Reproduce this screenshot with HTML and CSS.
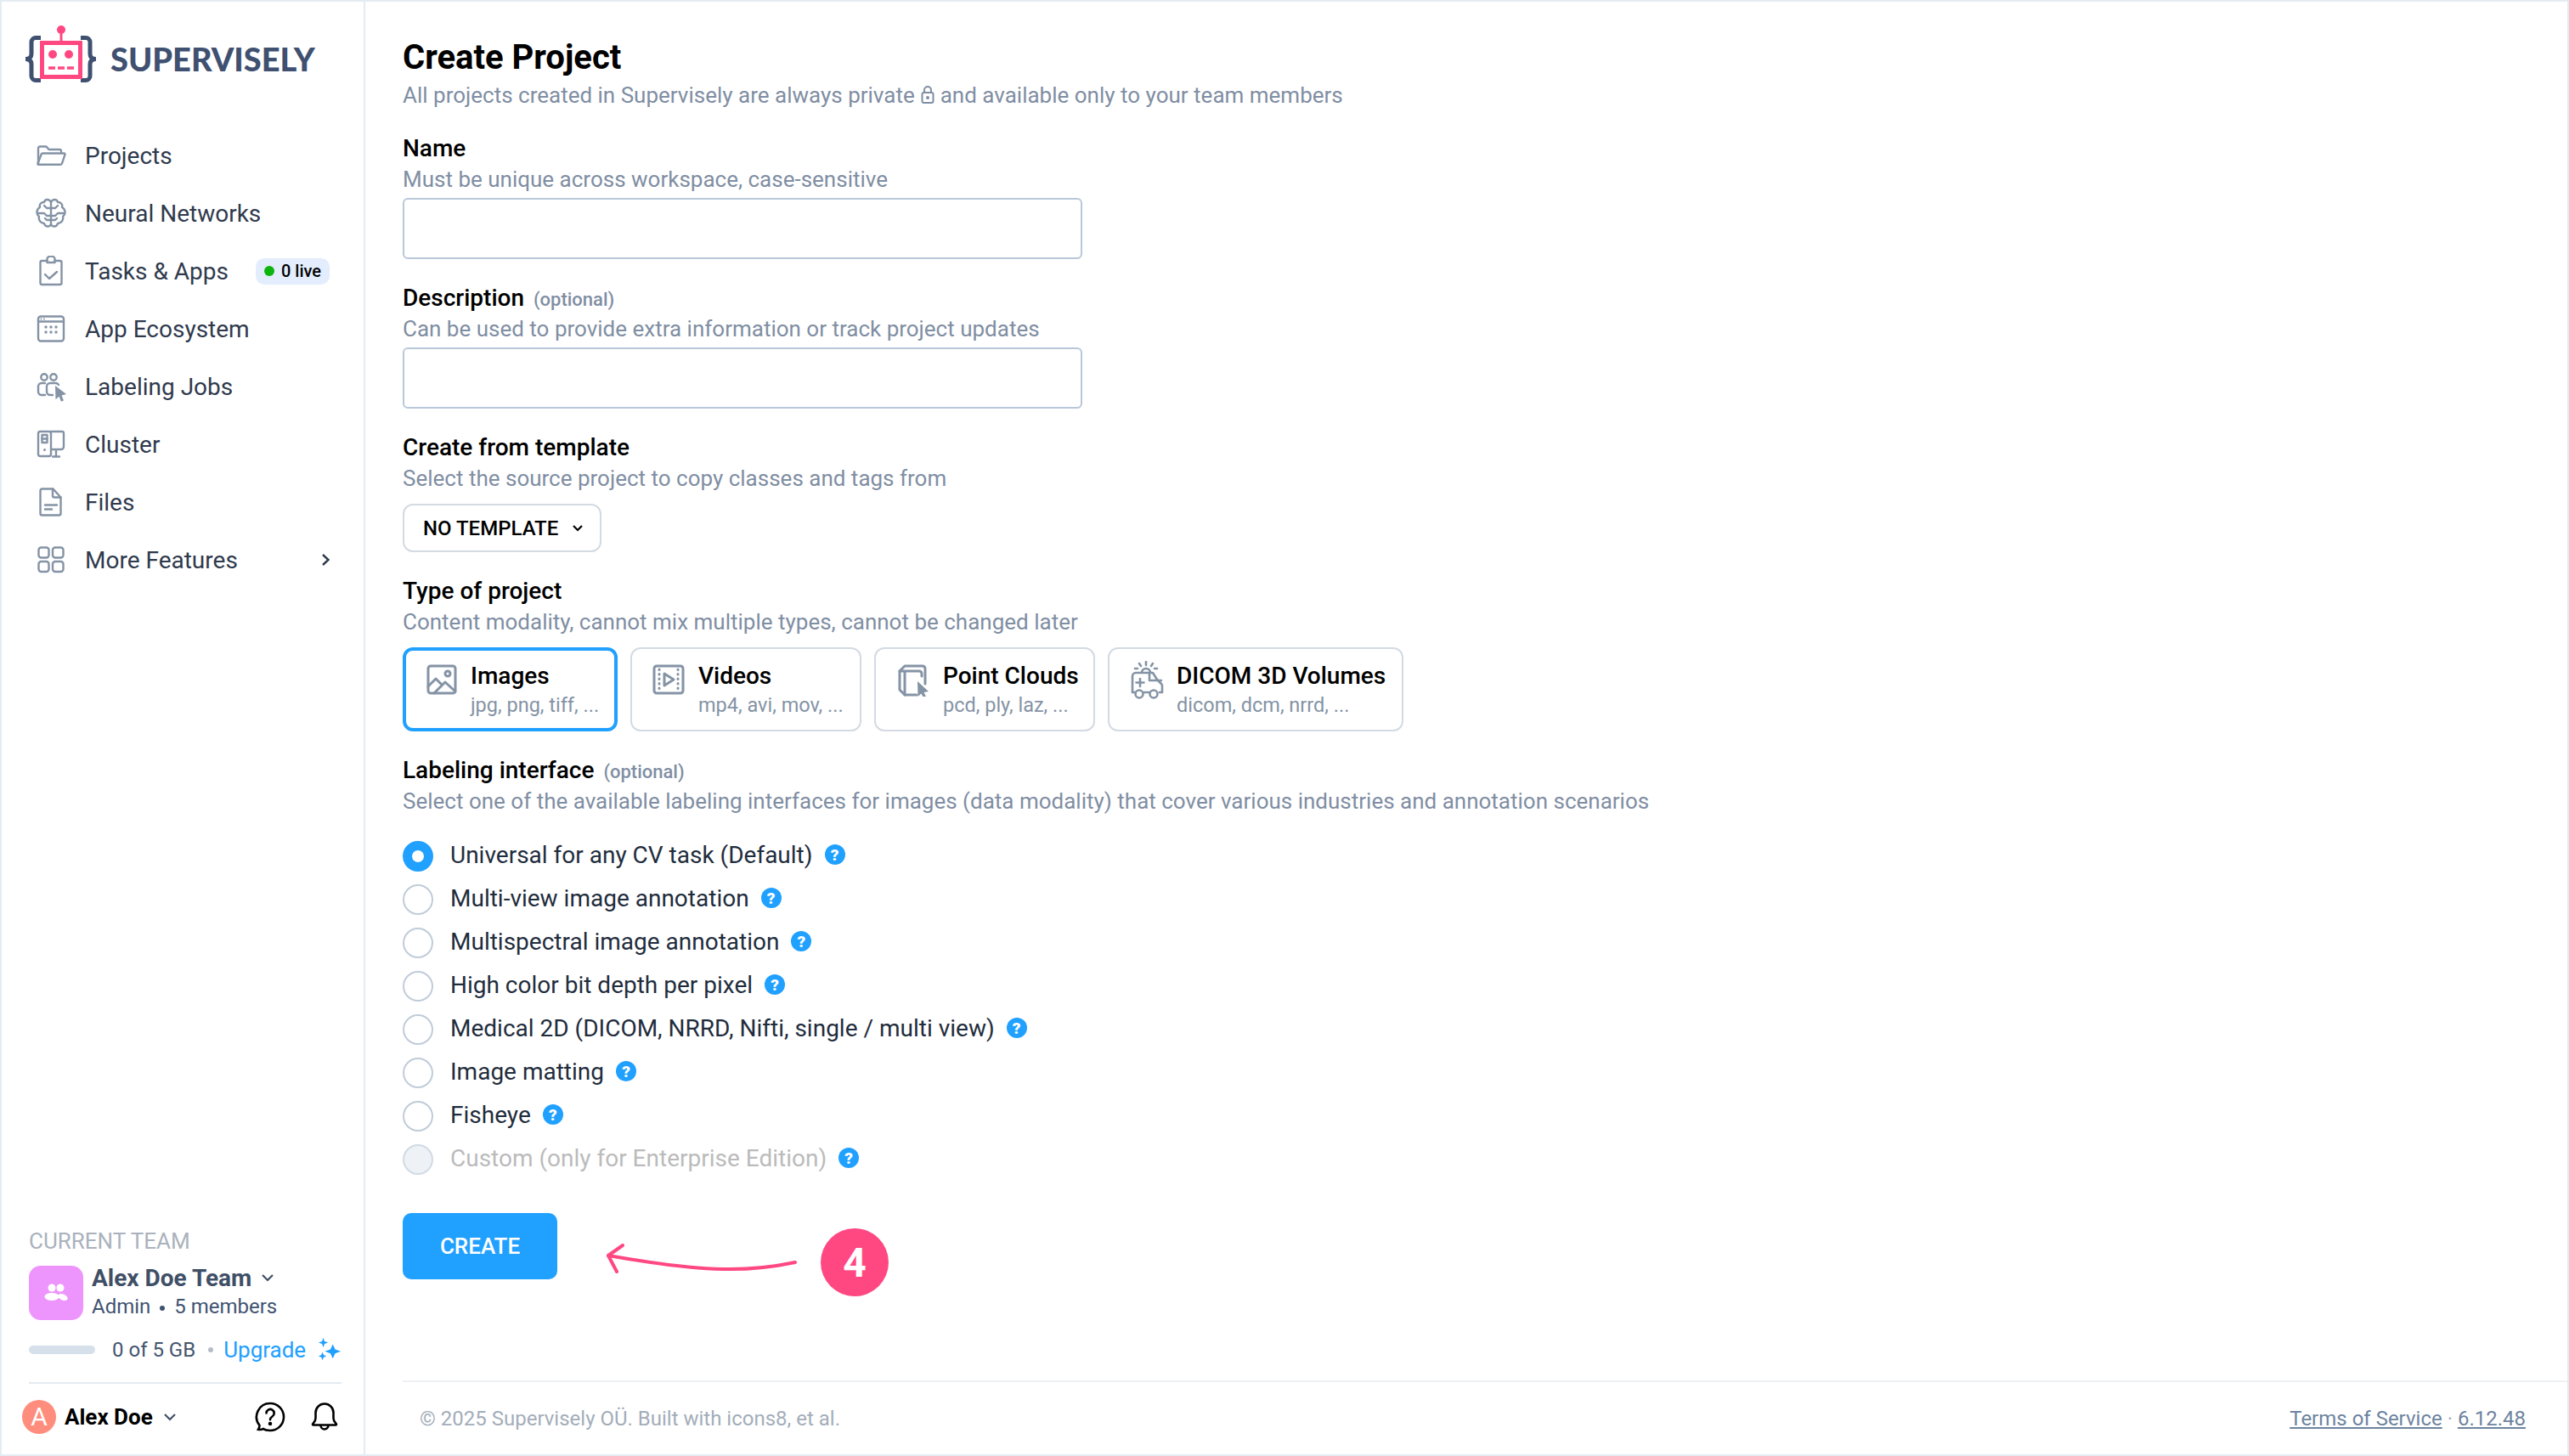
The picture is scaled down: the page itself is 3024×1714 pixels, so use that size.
FILE: index.html
```html
<!DOCTYPE html>
<html>
<head>
    <title>Create Project</title>
    <link rel="stylesheet" href="styles.css">
</head>
<body>
<div class="app">
    <aside class="sidebar">
        <div class="logo">
            <svg class="logo-mark" width="84" height="70" viewBox="0 0 84 70" fill="none">
                <path d="M18 14.500h-6a5 5 0 0 0-5 5v14c0 3-1.500 6-7 6 5.500 0 7 3 7 6v14a5 5 0 0 0 5 5h6" stroke="#3f5070" stroke-width="5"/>
                <path d="M65 14.500h6a5 5 0 0 1 5 5v14c0 3 1.500 6 7 6-5.500 0-7 3-7 6v14a5 5 0 0 1-5 5h-6" stroke="#3f5070" stroke-width="5"/>
                <rect x="19.500" y="20.500" width="45" height="40" stroke="#ff4882" stroke-width="5"/>
                <circle cx="42" cy="5" r="5" fill="#ff4882"/>
                <path d="M42 8v12" stroke="#ff4882" stroke-width="3"/>
                <circle cx="32" cy="34" r="5" fill="#ff4882"/>
                <circle cx="51" cy="34" r="5" fill="#ff4882"/>
                <path d="M27 50h30" stroke="#ff4882" stroke-width="3.500" stroke-dasharray="8 3"/>
            </svg>
            <span class="logo-text">SUPERVISELY</span>
        </div>

        <nav class="nav">
            <a class="nav-item">
                <svg class="nav-icon" viewBox="0 0 36 36"><path d="M3 27V9.500a2 2 0 0 1 2-2h7.500l3 3.500H28a2 2 0 0 1 2 2v2"/><path d="M8.500 15.500h25a1 1 0 0 1 1 1.300l-3.500 10.500a2 2 0 0 1-2 1.500H3.500a1 1 0 0 1-1-1.300L6.500 17a2 2 0 0 1 2-1.500z"/></svg>
                <span>Projects</span>
            </a>
            <a class="nav-item">
                <svg class="nav-icon" viewBox="0 0 36 36"><path d="M18 5C16 1 11 1 10 5 6 5 4 8 5 11 1 13 0 19 4 22 3 26 6 30 10 30 11 34 16 35 18 31V5z"/><path d="M18 5C20 1 25 1 26 5 30 5 32 8 31 11 35 13 36 19 32 22 33 26 30 30 26 30 25 34 20 35 18 31"/><path d="M18 12h-5l-3-3M3 18h7l3 3h5M18 26h-5l-2-2M18 12h5l3-3M33 18h-7l-3 3h-5M18 26h5l2-2"/></svg>
                <span>Neural Networks</span>
            </a>
            <a class="nav-item">
                <svg class="nav-icon" viewBox="0 0 36 36"><path d="M13.500 6H7.500a2 2 0 0 0-2 2v24a2 2 0 0 0 2 2h21a2 2 0 0 0 2-2V8a2 2 0 0 0-2-2h-6"/><path d="M13.500 8V3.500a4.500 3 0 0 1 9 0V8z"/><path d="M11 22l5 5 9-8"/></svg>
                <span>Tasks &amp; Apps</span>
                <span class="live-badge"><i class="live-dot"></i>0 live</span>
            </a>
            <a class="nav-item">
                <svg class="nav-icon" viewBox="0 0 36 36"><rect x="3" y="3.500" width="30" height="29" rx="3"/><path d="M3 9.500h30"/><g class="dots"><circle cx="6.500" cy="6.500" r="1"/><circle cx="10" cy="6.500" r="1"/><circle cx="12" cy="16" r="1.700"/><circle cx="18" cy="16" r="1.700"/><circle cx="24" cy="16" r="1.700"/><circle cx="12" cy="22" r="1.700"/><circle cx="18" cy="22" r="1.700"/><circle cx="24" cy="22" r="1.700"/></g></svg>
                <span>App Ecosystem</span>
            </a>
            <a class="nav-item">
                <svg class="nav-icon" viewBox="0 0 36 36"><circle cx="10" cy="7" r="3.700"/><circle cx="21" cy="7" r="3.700"/><path d="M11 28H7a4 4 0 0 1-4-4v-6a4 4 0 0 1 4-4h4"/><path d="M20 28h-3a4 4 0 0 1-4-4v-6a4 4 0 0 1 4-4h7a4 4 0 0 1 3 2"/><path class="solid" d="M23 17l13 10-5.500 1.500 2.500 6-3 1.200-2.500-6-4 3.500z"/></svg>
                <span>Labeling Jobs</span>
            </a>
            <a class="nav-item">
                <svg class="nav-icon" viewBox="0 0 36 36"><rect x="3" y="3" width="15" height="29" rx="2.500"/><rect x="7.500" y="7" width="6" height="9"/><path d="M7.500 11.500h6"/><circle class="solid" cx="10.500" cy="24.500" r="1.500"/><path d="M18 3h13a2 2 0 0 1 2 2v16a3 3 0 0 1-3 3H18M24 24v8M20 32.500h8"/></svg>
                <span>Cluster</span>
            </a>
            <a class="nav-item">
                <svg class="nav-icon" viewBox="0 0 36 36"><path d="M7.500 2.500h13l9 10v19a2 2 0 0 1-2 2h-20a2 2 0 0 1-2-2v-27a2 2 0 0 1 2-2z"/><path d="M20 2.500v8a2 2 0 0 0 2 2h7.500M11 21.500h14M11 26.500h8"/></svg>
                <span>Files</span>
            </a>
            <a class="nav-item">
                <svg class="nav-icon" viewBox="0 0 36 36"><rect x="3.500" y="3.500" width="12" height="12" rx="3"/><rect x="20" y="3.500" width="12.500" height="12" rx="3"/><rect x="3.500" y="20" width="12" height="12" rx="3"/><rect x="20" y="20" width="12.500" height="12" rx="3"/></svg>
                <span>More Features</span>
                <svg class="nav-arrow" width="12" height="16" viewBox="0 0 12 16"><path d="M2 2l6.500 6L2 14"/></svg>
            </a>
        </nav>

        <div class="team">
            <div class="team-caption">CURRENT TEAM</div>
            <div class="team-row">
                <div class="team-avatar">
                    <svg width="28" height="22" viewBox="0 0 28 22" fill="#fff"><circle cx="9" cy="5" r="4.500"/><circle cx="19" cy="5" r="4.500"/><ellipse cx="9" cy="15.500" rx="8.500" ry="4.500"/><ellipse cx="22" cy="16" rx="6" ry="3.500" transform="rotate(25 22 16)"/></svg>
                </div>
                <div class="team-info">
                    <div class="team-name">Alex Doe Team
                        <svg class="chev" width="16" height="10" viewBox="0 0 16 10"><path d="M2 2l6 6 6-6"/></svg>
                    </div>
                    <div class="team-role">Admin <i class="role-dot"></i> 5 members</div>
                </div>
            </div>
            <div class="usage">
                <div class="usage-bar"></div>
                <span class="usage-text">0 of 5 GB</span>
                <i class="usage-dot"></i>
                <a class="upgrade">Upgrade</a>
                <svg class="sparkle" width="28" height="28" viewBox="0 0 30 30" fill="#20a0ff"><path d="M19 8l3 6.500 7 2.500-7 2.500-3 6.500-3-6.500-7-2.500 7-2.500z"/><path d="M7 0l1.600 4.400L13 6 8.600 7.600 7 12 5.400 7.600 1 6l4.400-1.600z"/><path d="M6 18l1.500 3.500L11 23l-3.500 1.500L6 28l-1.500-3.500L1 23l3.500-1.500z"/></svg>
            </div>
        </div>

        <div class="user-row">
            <div class="user-avatar">A</div>
            <span class="user-name">Alex Doe</span>
            <svg class="chev" width="16" height="10" viewBox="0 0 16 10"><path d="M2 2l6 6 6-6"/></svg>
            <svg class="user-help" width="36" height="36" viewBox="0 0 36 36" fill="none" stroke="#000" stroke-width="2.600"><path d="M18 2a16 16 0 0 1 0 32c-3 0-6-.5-8-2-1.500.8-4 1.200-6 .8 1-1.500 1.500-3 1.500-4.800A16 16 0 0 1 18 2z"/><path d="M13.500 13.500a4.600 4.600 0 1 1 7 4c-1.500 1-2.500 1.800-2.500 3.800" stroke-linecap="round"/><circle cx="18" cy="26" r="1" fill="#000"/></svg>
            <svg class="user-bell" width="32" height="36" viewBox="0 0 32 36" fill="none" stroke="#000" stroke-width="2.600"><path d="M2 26.500c0-1 3.500-2.500 3.500-7V13a10.500 10.500 0 0 1 21 0v6.500c0 4.500 3.500 6 3.500 7 0 .8-.5 1-1.500 1h-25c-1 0-1.500-.2-1.500-1z"/><path d="M11.500 28a4.500 4.500 0 0 0 9 0"/></svg>
        </div>
    </aside>

    <main class="main">
        <div class="content">
            <h1 class="title">Create Project</h1>
            <p class="hint">All projects created in Supervisely are always private
                <svg class="lock" width="16" height="24" viewBox="0 0 16 24" fill="none" stroke="#7f8ea3" stroke-width="2"><rect x="1.500" y="9" width="13" height="12" rx="2"/><path d="M4 9V6a4 4 0 0 1 8 0v3"/><circle cx="8" cy="15" r="1" fill="#7f8ea3"/></svg>
                and available only to your team members</p>

            <div class="field field-first">
                <div class="label">Name</div>
                <p class="hint">Must be unique across workspace, case-sensitive</p>
                <input class="text-input" type="text">
            </div>

            <div class="field">
                <div class="label">Description <span class="optional">(optional)</span></div>
                <p class="hint">Can be used to provide extra information or track project updates</p>
                <input class="text-input" type="text">
            </div>

            <div class="field">
                <div class="label">Create from template</div>
                <p class="hint">Select the source project to copy classes and tags from</p>
                <button class="select-btn">NO TEMPLATE
                    <svg class="chev-dark" width="14" height="10" viewBox="0 0 14 10"><path d="M2 2l5 5 5-5"/></svg>
                </button>
            </div>

            <div class="field">
                <div class="label">Type of project</div>
                <p class="hint">Content modality, cannot mix multiple types, cannot be changed later</p>
                <div class="cards">
                    <div class="card card-images card-active">
                        <svg class="card-icon" viewBox="0 0 36 36"><rect x="2" y="2" width="32" height="32" rx="3"/><circle cx="25" cy="11" r="3"/><path d="M2 26l9-9 7 7M9 34l13-13 12 11"/></svg>
                        <div class="card-text"><div class="card-title">Images</div><div class="card-sub">jpg, png, tiff, ...</div></div>
                    </div>
                    <div class="card card-videos">
                        <svg class="card-icon" viewBox="0 0 38 36"><rect x="2" y="2" width="34" height="32" rx="3"/><path class="strip" d="M8 6v25M30 6v25"/><path d="M14 11l11 7-11 7z"/></svg>
                        <div class="card-text"><div class="card-title">Videos</div><div class="card-sub">mp4, avi, mov, ...</div></div>
                    </div>
                    <div class="card card-points">
                        <svg class="card-icon" viewBox="0 0 36 38"><path d="M8 2h21a3 3 0 0 1 3 3v18M8 2L2 8v22l6 6h14"/><path d="M2 8h23a3 3 0 0 1 3 3v3M8 8v28"/><path class="solid" d="M23 20l13 12-5.500 1 3 6-3 1.500-3-6-4 3.500z"/></svg>
                        <div class="card-text"><div class="card-title">Point Clouds</div><div class="card-sub">pcd, ply, laz, ...</div></div>
                    </div>
                    <div class="card card-dicom">
                        <svg class="card-icon" viewBox="0 0 40 45"><path d="M11 3l2 3M19 1v4M27 3l-2 3M6 9h3M29 9h3"/><path d="M14 14a5 5 0 0 1 10 0M3 37V18a4 4 0 0 1 4-4h20l5 8 5 5a3 3 0 0 1 1 2v8h-3"/><path d="M23 14v9h14"/><path d="M12 21v9M7.500 25.500h9"/><path d="M3 37h3M17 37h6"/><circle cx="11" cy="39" r="4.500"/><circle cx="28" cy="39" r="4.500"/></svg>
                        <div class="card-text"><div class="card-title">DICOM 3D Volumes</div><div class="card-sub">dicom, dcm, nrrd, ...</div></div>
                    </div>
                </div>
            </div>

            <div class="field">
                <div class="label">Labeling interface <span class="optional">(optional)</span></div>
                <p class="hint">Select one of the available labeling interfaces for images (data modality) that cover various industries and annotation scenarios</p>
                <div class="radios">
                    <label class="radio-row"><i class="radio radio-on"></i><span>Universal for any CV task (Default)</span><b class="help">?</b></label>
                    <label class="radio-row"><i class="radio"></i><span>Multi-view image annotation</span><b class="help">?</b></label>
                    <label class="radio-row"><i class="radio"></i><span>Multispectral image annotation</span><b class="help">?</b></label>
                    <label class="radio-row"><i class="radio"></i><span>High color bit depth per pixel</span><b class="help">?</b></label>
                    <label class="radio-row"><i class="radio"></i><span>Medical 2D (DICOM, NRRD, Nifti, single / multi view)</span><b class="help">?</b></label>
                    <label class="radio-row"><i class="radio"></i><span>Image matting</span><b class="help">?</b></label>
                    <label class="radio-row"><i class="radio"></i><span>Fisheye</span><b class="help">?</b></label>
                    <label class="radio-row radio-row-off"><i class="radio radio-off"></i><span>Custom (only for Enterprise Edition)</span><b class="help">?</b></label>
                </div>
            </div>

            <div class="actions">
                <button class="create-btn">CREATE</button>
                <svg class="arrow" width="240" height="50" viewBox="0 0 240 50" fill="none" stroke="#ff4882" stroke-width="4" stroke-linecap="round" stroke-linejoin="round"><path d="M222 22C170 33 120 35 2 14"/><path d="M19 2L2 14l10 19"/></svg>
                <div class="step">4</div>
            </div>
        </div>

        <footer class="footer">
            <span>© 2025 Supervisely OÜ. Built with icons8, et al.</span>
            <span class="footer-links"><a>Terms of Service</a> <i>·</i> <a>6.12.48</a></span>
        </footer>
    </main>
</div>
</body>
</html>
```

FILE: styles.css
```css
html, body {
    margin: 0;
    height: 100%;
}

body {
    background-color: #e4ebf1;
    font-family: Roboto, "Liberation Sans", sans-serif;
    color: #000;
}

* {
    box-sizing: border-box;
}

i {
    font-style: normal;
}

.app {
    display: flex;
    height: 1714px;
    padding: 2px;
    background-color: #e4ebf1;
}

/* sidebar */
.sidebar {
    display: flex;
    flex-direction: column;
    width: 426px;
    flex-shrink: 0;
    background-color: #fff;
    margin-right: 2px;
}

.logo {
    display: flex;
    align-items: center;
    height: 70px;
    margin: 28px 0 0 28px;
}

.logo-text {
    margin-left: 16px;
    padding-top: 7px;
    font-family: Lato, sans-serif;
    font-weight: 900;
    font-size: 38px;
    color: #3f5070;
}

.nav {
    margin-top: 49px;
    padding: 0 40px;
}

.nav-item {
    display: flex;
    align-items: center;
    height: 68px;
    gap: 22px;
    font-size: 28px;
    color: #2f3a4d;
}

.nav-icon {
    width: 36px;
    height: 36px;
    flex-shrink: 0;
    fill: none;
    stroke: #8493a5;
    stroke-width: 2.400;
    stroke-linejoin: round;
    stroke-linecap: round;
}

.nav-icon .dots,
.nav-icon .solid {
    fill: #8493a5;
    stroke: none;
}

.nav-arrow {
    margin-left: auto;
    margin-right: -2px;
    fill: none;
    stroke: #2f3a4d;
    stroke-width: 2.400;
}

.live-badge {
    display: flex;
    align-items: center;
    gap: 8px;
    height: 31px;
    margin-left: auto;
    padding: 0 10px;
    border-radius: 10px;
    background-color: #e3edfd;
    font-size: 20px;
    font-weight: 500;
    color: #000;
}

.live-dot {
    width: 12px;
    height: 12px;
    border-radius: 50%;
    background-color: #0eb40e;
}

.team {
    margin-top: auto;
    padding: 0 26px 0 32px;
}

.team-caption {
    font-size: 26px;
    line-height: 32px;
    color: #aab2bd;
}

.team-row {
    display: flex;
    gap: 10px;
    margin-top: 13px;
}

.team-avatar {
    display: flex;
    align-items: center;
    justify-content: center;
    width: 64px;
    height: 64px;
    border-radius: 14px;
    background-color: #ee94fd;
}

.team-name {
    display: flex;
    align-items: center;
    gap: 11px;
    height: 28px;
    font-size: 28px;
    font-weight: 700;
    color: #3f4f66;
}

.team-role {
    margin-top: 5px;
    font-size: 24px;
    line-height: 30px;
    color: #3f5371;
}

.role-dot {
    display: inline-block;
    width: 6px;
    height: 6px;
    margin: 0 5px;
    vertical-align: middle;
    border-radius: 50%;
    background-color: #3f5371;
}

.chev, .chev-dark {
    fill: none;
    stroke: #3f4f66;
    stroke-width: 2.200;
}

.chev-dark {
    stroke: #000;
}

.usage {
    display: flex;
    align-items: center;
    margin-top: 20px;
    height: 30px;
    font-size: 24px;
    white-space: nowrap;
}

.usage-bar {
    width: 78px;
    height: 10px;
    flex-shrink: 0;
    border-radius: 5px;
    background-color: #d5e0ea;
}

.usage-text {
    margin-left: 20px;
    color: #44566f;
}

.usage-dot {
    width: 6px;
    height: 6px;
    flex-shrink: 0;
    margin: 0 12px 0 15px;
    border-radius: 50%;
    background-color: #b4bcc7;
}

.upgrade {
    font-size: 26px;
    color: #20a0ff;
}

.sparkle {
    flex-shrink: 0;
    margin-left: 14px;
}

.user-row {
    display: flex;
    align-items: center;
    height: 85px;
    margin: 23px 26px 0 32px;
    padding: 0 0 6px;
    border-top: 2px solid #e3eaf0;
}

.user-avatar {
    display: flex;
    align-items: center;
    justify-content: center;
    width: 40px;
    height: 40px;
    margin-left: -8px;
    border-radius: 50%;
    background-color: #ff8d7d;
    color: #fff;
    font-size: 30px;
}

.user-name {
    margin: 0 12px 0 10px;
    font-size: 26px;
    font-weight: 700;
}

.user-help {
    margin-left: auto;
}

.user-bell {
    margin-left: 30px;
    margin-right: 4px;
}

/* main area */
.main {
    display: flex;
    flex-direction: column;
    flex: 1;
    background-color: #fff;
}

.content {
    padding: 40px 0 0 44px;
}

.title {
    margin: 0;
    font-size: 40px;
    line-height: 52px;
    font-weight: 700;
}

.hint {
    display: flex;
    align-items: center;
    gap: 7px;
    margin: 0;
    font-size: 26px;
    line-height: 36px;
    color: #7f8ea3;
}

.field {
    margin-top: 27px;
}

.field-first {
    margin-top: 26px;
}

.label {
    font-size: 28px;
    line-height: 37px;
    font-weight: 500;
}

.optional {
    margin-left: 4px;
    font-size: 22px;
    line-height: 1;
    color: #7f8ea3;
}

.text-input {
    display: block;
    width: 800px;
    height: 72px;
    margin-top: 4px;
    border: 2px solid #b9c8d9;
    border-radius: 6px;
    background-color: #fff;
}

.select-btn {
    display: flex;
    align-items: center;
    gap: 16px;
    height: 57px;
    margin-top: 12px;
    padding: 0 19px 0 22px;
    border: 2px solid #d3dae2;
    border-radius: 12px;
    background-color: #fff;
    font-family: Roboto, sans-serif;
    font-size: 24px;
    font-weight: 500;
    color: #000;
}

.cards {
    display: flex;
    gap: 15px;
    margin-top: 12px;
}

.card {
    display: flex;
    gap: 16px;
    height: 99px;
    padding: 18px 0 0 26px;
    border: 2px solid #d3dae2;
    border-radius: 12px;
}

.card-active {
    border: 4px solid #20a0ff;
    padding: 16px 0 0 24px;
}

.card-text {
    margin-top: -4px;
    white-space: nowrap;
}

.card-icon {
    flex-shrink: 0;
    width: 36px;
    height: 36px;
    fill: none;
    stroke: #8493a5;
    stroke-width: 3;
    stroke-linejoin: round;
    stroke-linecap: round;
}

.card-icon .solid {
    fill: #8493a5;
    stroke: none;
}

.card-icon .strip {
    stroke-dasharray: 0.5 5;
}

.card-images { width: 253px; }
.card-videos { width: 272px; padding-left: 24px; }
.card-points { width: 260px; gap: 17px; }
.card-dicom { width: 348px; padding-left: 24px; gap: 15px; }

.card-videos .card-icon {
    width: 38px;
}

.card-points .card-icon {
    height: 38px;
}

.card-dicom .card-icon {
    width: 40px;
    height: 45px;
    margin-top: -4px;
    stroke-width: 2.600;
}

.card-title {
    font-size: 28px;
    line-height: 35px;
    font-weight: 500;
}

.card-sub {
    font-size: 23.500px;
    line-height: 34px;
    color: #8493a5;
}

.radios {
    margin-top: 21px;
}

.radio-row {
    display: flex;
    align-items: center;
    height: 51px;
    font-size: 28px;
    color: #1f2d3d;
}

.radio-row span {
    padding-bottom: 3px;
}

.radio {
    width: 36px;
    height: 36px;
    margin-right: 20px;
    border: 2px solid #c0ccda;
    border-radius: 50%;
    background-color: #fff;
}

.radio-on {
    border: 11px solid #20a0ff;
}

.radio-off {
    background-color: #eef1f6;
    border-color: #d1dbe5;
}

.radio-row-off span {
    color: #bbb;
}

.help {
    display: flex;
    align-items: center;
    justify-content: center;
    width: 24px;
    height: 24px;
    margin: 0 0 3px 14px;
    border-radius: 50%;
    background-color: #20a0ff;
    color: #fff;
    font-size: 19px;
    font-weight: 900;
}

.actions {
    position: relative;
    margin-top: 38px;
}

.create-btn {
    display: block;
    width: 182px;
    height: 78px;
    border: none;
    border-radius: 10px;
    background-color: #20a0ff;
    color: #fff;
    font-family: Roboto, sans-serif;
    font-size: 26px;
    font-weight: 500;
}

/* annotation drawn on top of the page */
.arrow {
    position: absolute;
    left: 240px;
    top: 36px;
}

.step {
    position: absolute;
    left: 492px;
    top: 18px;
    display: flex;
    align-items: center;
    justify-content: center;
    width: 80px;
    height: 80px;
    border-radius: 50%;
    background-color: #ff4882;
    color: #fff;
    font-size: 48px;
    font-weight: 700;
}

.footer {
    display: flex;
    justify-content: space-between;
    align-items: center;
    height: 87px;
    margin: auto 0 0 44px;
    padding: 0 49px 0 20px;
    border-top: 2px solid #eef1f4;
    font-size: 24px;
    color: #a3adba;
}

.footer-links {
    color: #6d84a0;
}

.footer-links a {
    text-decoration: underline;
}

.footer-links i {
    color: #a3adba;
}
```
